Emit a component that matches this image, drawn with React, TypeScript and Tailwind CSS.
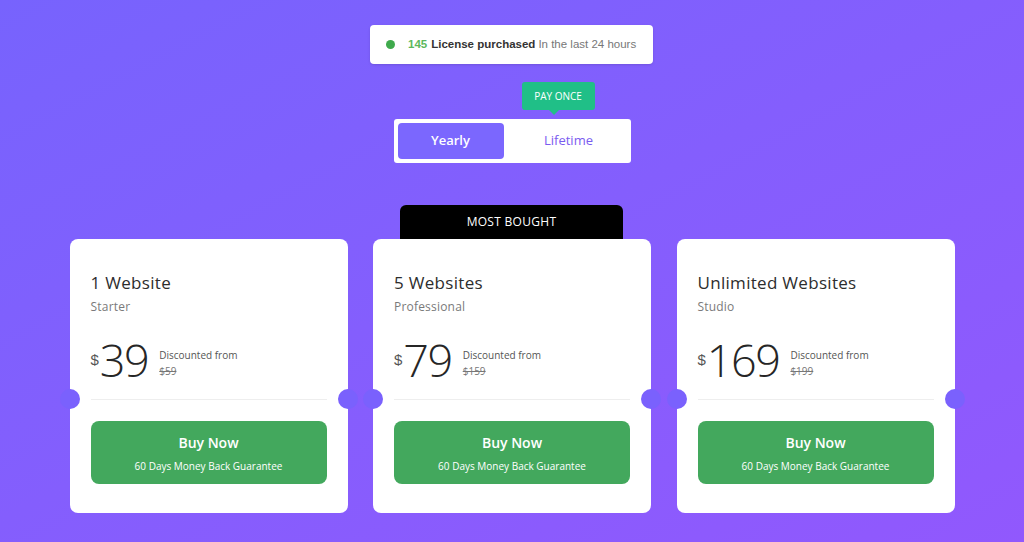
import React from 'react';

const plans = [
    { name: '1 Website', tier: 'Starter', price: '39', was: '$59', featured: false },
    { name: '5 Websites', tier: 'Professional', price: '79', was: '$159', featured: true },
    { name: 'Unlimited Websites', tier: 'Studio', price: '169', was: '$199', featured: false },
];

const PlanCard = ({ plan }: any) => {
    return (
        <div className="relative w-[278px] h-[274px] bg-white rounded-[8px] px-[21px] pt-[32px]">
            {/* Most bought tab */}
            {plan.featured && (
                <div className="absolute left-[27px] top-[-34px] w-[223px] h-[34px] bg-black rounded-t-[6px] flex items-center justify-center text-white text-[12px] tracking-[0.3px]">
                    MOST BOUGHT
                </div>
            )}

            {/* Ticket notches */}
            <div className="absolute left-[-10px] top-[150px] w-[20px] h-[20px] rounded-full bg-[#7a61fd]"></div>
            <div className="absolute right-[-10px] top-[150px] w-[20px] h-[20px] rounded-full bg-[#7a61fd]"></div>

            <p className="text-[17px] leading-[24px] text-[#2d2d2d] tracking-[0.3px]">{plan.name}</p>
            <p className="mt-[4px] text-[12px] leading-[16px] text-[#7a7a7a] tracking-[0.2px]">{plan.tier}</p>

            <div className="mt-[22px] h-[44px] flex items-center">
                <span className="mt-[2px] text-[15px] text-[#555] font-['Liberation_Sans',sans-serif]">$</span>
                <span className="ml-[1px] text-[45px] leading-none font-light text-[#262626] tracking-[-1.5px]">{plan.price}</span>
                <div className="ml-[11px] mt-[8px] flex flex-col text-[10px] leading-[16px] text-[#555]">
                    <span>Discounted from</span>
                    <span className="line-through text-[#777]">{plan.was}</span>
                </div>
            </div>

            <div className="mt-[18px] border-t border-[#eeeeee]"></div>

            <button className="mt-[21px] w-full h-[63px] rounded-[8px] bg-[#43a85d] flex flex-col items-center justify-center text-white">
                <span className="text-[14px] leading-[20px] font-semibold">Buy Now</span>
                <span className="mt-[6px] text-[10px] leading-[14px]">60 Days Money Back Guarantee</span>
            </button>
        </div>
    );
};

const App = () => {
    return (
        <div className="min-h-screen w-full bg-gradient-to-br from-[#7763fd] to-[#9158fd] flex flex-col items-center pt-[25px] font-['Open_Sans',sans-serif]">

            {/* Purchases badge */}
            <div className="mr-[1px] w-[283px] h-[39px] bg-white rounded-[4px] shadow-sm flex items-center pl-[16px] text-[11.5px] font-['Liberation_Sans',Arial,sans-serif]">
                <span className="w-[9px] h-[9px] rounded-full bg-[#3faa4c]"></span>
                <span className="ml-[13px] font-bold text-[#5cb85c]">145</span>
                <span className="ml-[4px] font-bold text-[#333]">License purchased</span>
                <span className="ml-[3px] text-[#777]">In the last 24 hours</span>
            </div>

            {/* Billing toggle */}
            <div className="relative mt-[55px] w-[237px] h-[44px] p-[4px] bg-white rounded-[3px] flex">
                <div className="absolute left-[128px] top-[-37px] w-[73px] h-[28px] bg-[#20bf87] rounded-[3px] flex items-center justify-center text-white text-[10px]">
                    PAY ONCE
                    <span className="absolute left-[27px] bottom-[-5px] w-0 h-0 border-l-[5px] border-r-[5px] border-t-[5px] border-l-transparent border-r-transparent border-t-[#20bf87]"></span>
                </div>
                <button className="w-[106px] h-[36px] rounded-[4px] bg-[#7b67fe] text-white text-[13px] font-semibold">Yearly</button>
                <button className="flex-1 h-[36px] pl-[7px] text-[#7a5cf0] text-[13px] font-medium">Lifetime</button>
            </div>

            {/* Plans */}
            <div className="mt-[76px] flex gap-[25.5px]">
                {plans.map((plan) => (
                    <PlanCard key={plan.name} plan={plan} />
                ))}
            </div>
        </div>
    );
};

export default App;
